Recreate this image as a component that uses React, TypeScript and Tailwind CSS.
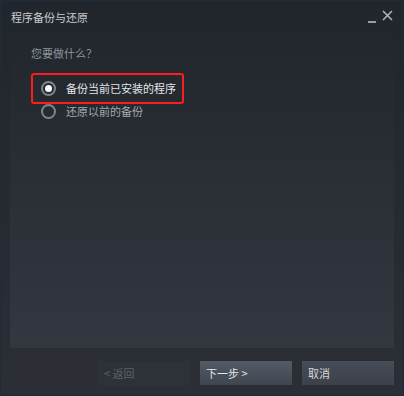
import { useState } from 'react';

const font = { fontFamily: '"Noto Sans CJK SC", "Liberation Sans", sans-serif' };

function Radio({ checked }: { checked: boolean }) {
  return (
    <span className="w-[15px] h-[15px] rounded-full border-2 border-[#80858c] flex items-center justify-center shrink-0">
      {checked && <span className="w-[7px] h-[7px] rounded-full bg-white" />}
    </span>
  );
}

export default function App() {
  const [choice, setChoice] = useState(0);

  return (
    <div className="w-[404px] h-[396px] overflow-hidden border border-[#1d2b3f] bg-gradient-to-b from-[#21252c] to-[#2b2f35] flex flex-col text-[11px] whitespace-nowrap" style={font}>
      {/* title bar */}
      <div className="h-[32px] flex items-center pl-[10px] pr-[10px] shrink-0">
        <span className="text-[#c9cdd2] text-[11px]">程序备份与还原</span>
        <div className="ml-auto flex items-end gap-[6px]">
          <span className="w-[8px] h-[2px] bg-[#9a9ea4] mb-[1px]" />
          <svg width="11" height="11" viewBox="0 0 11 11" className="mb-[3px]">
            <path d="M1 1 L10 10 M10 1 L1 10" stroke="#b4b8be" strokeWidth="1.5" />
          </svg>
        </div>
      </div>

      {/* content panel */}
      <div className="mx-[9px] h-[315px] bg-gradient-to-b from-[#22262d] to-[#33373f] pl-[21px] pt-[12px] flex flex-col">
        <div className="text-[#8c949d] leading-[16px]">您要做什么？</div>
        <div className="mt-[12px] w-[153px] h-[31px] border-2 border-[#ff1c1c] rounded-[3px] flex items-center pl-[8px] gap-[10px] cursor-pointer" onClick={() => setChoice(0)}>
          <Radio checked={choice === 0} />
          <span className="text-[#e2e5e8]">备份当前已安装的程序</span>
        </div>
        <div className="mt-[-1px] flex items-center pl-[10px] gap-[10px] cursor-pointer" onClick={() => setChoice(1)}>
          <Radio checked={choice === 1} />
          <span className="text-[#a3a9b0]">还原以前的备份</span>
        </div>
      </div>

      {/* buttons */}
      <div className="flex justify-end gap-[10px] pr-[9px] mt-[13px]">
        <button className="w-[92px] h-[24px] bg-[#2d3138] text-[#5d636b] text-left pl-[6px]">&lt; 返回</button>
        <button className="w-[92px] h-[24px] bg-gradient-to-b from-[#545b66] to-[#3f454f] text-[#e3e6e9] text-left pl-[6px]">下一步 &gt;</button>
        <button className="w-[92px] h-[24px] bg-gradient-to-b from-[#474d57] to-[#3b4049] text-[#d6d9dc] text-left pl-[6px]">取消</button>
      </div>
    </div>
  );
}
